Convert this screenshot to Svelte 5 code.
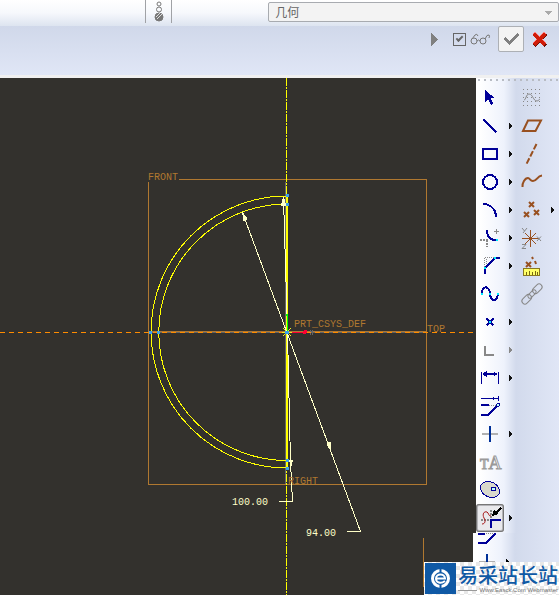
<script lang="ts">
	interface Tool {
		name: string;
		label: string;
		flyout?: boolean;
		disabled?: boolean;
	}

	const sketchTools: Tool[] = [
		{ name: 'select', label: 'Select' },
		{ name: 'line', label: 'Line', flyout: true },
		{ name: 'rect', label: 'Rectangle', flyout: true },
		{ name: 'circle', label: 'Circle', flyout: true },
		{ name: 'arc', label: 'Arc', flyout: true },
		{ name: 'fillet', label: 'Fillet', flyout: true },
		{ name: 'chamfer', label: 'Chamfer', flyout: true },
		{ name: 'spline', label: 'Spline' },
		{ name: 'point', label: 'Point', flyout: true },
		{ name: 'edge', label: 'Use edge', flyout: true, disabled: true },
		{ name: 'dimension', label: 'Dimension', flyout: true },
		{ name: 'modify', label: 'Modify' },
		{ name: 'constrain', label: 'Constrain', flyout: true },
		{ name: 'text', label: 'Text' },
		{ name: 'palette', label: 'Palette' },
		{ name: 'trim', label: 'Trim', flyout: true }
	];

	const datumTools: Tool[] = [
		{ name: 'sketch', label: 'Sketch' },
		{ name: 'plane', label: 'Datum plane' },
		{ name: 'axis', label: 'Datum axis' },
		{ name: 'curve', label: 'Datum curve' },
		{ name: 'points', label: 'Datum points', flyout: true },
		{ name: 'csys', label: 'Coordinate system' },
		{ name: 'analysis', label: 'Analysis' },
		{ name: 'link', label: 'Reference' }
	];

	let active = $state('trim');
	let filter = $state('geometry');
	let preview = $state(true);
</script>

{#snippet icon(name: string)}
	<svg class="icon" viewBox="0 0 28 28" width="28" height="28" aria-hidden="true">
		{#if name === 'select'}
			<path class="fill-navy" d="M9 6V18L12 15.5L15 21L17.5 20L14.5 14.5L18 13.5Z" />
		{:else if name === 'line'}
			<path class="navy" d="M7.5 7.5L20.5 20.5" />
		{:else if name === 'rect'}
			<rect class="navy" x="7" y="9" width="14" height="10" />
		{:else if name === 'circle'}
			<circle class="navy" cx="14" cy="14" r="7" />
		{:else if name === 'arc'}
			<path class="navy" d="M7 8C14 8 20 13 20 21" />
		{:else if name === 'fillet'}
			<path class="navy" d="M11 6V9C12 13 15 16 20 16" />
			<path class="grey" d="M18 7.5H23M20.5 5V10" />
			<path class="grey-2 dots" d="M4 16H13M11 16V23" />
			<path class="fill-cyan" d="M20 15h2v2h-2z" />
		{:else if name === 'chamfer'}
			<path class="grey dots-1" d="M8.5 5.5H18M8.5 5.5V15M10.5 7V14" />
			<path class="navy" d="M24 6H19L9 16V22" />
			<path class="fill-cyan" d="M18 5h2v2h-2zM8 15h2v2h-2z" />
		{:else if name === 'spline'}
			<path class="navy" d="M6 14C6 5 13 5 14 14C15 22 21 22 22 14" />
			<path class="fill-cyan" d="M5 13h2v2h-2zM13 13h2v2h-2zM21 13h2v2h-2z" />
		{:else if name === 'point'}
			<path class="navy" d="M10.5 10.5L17.5 17.5M17.5 10.5L10.5 17.5" />
			<path class="fill-cyan" d="M13 13h2v2h-2z" />
		{:else if name === 'edge'}
			<path class="grey-2" d="M9 10V19H18" />
		{:else if name === 'dimension'}
			<path class="navy-1" d="M5.5 8V20M22.5 8V20" />
			<path class="navy" d="M8 10H20" />
			<path class="fill-navy" d="M6.5 10L10.5 7V13ZM21.5 10L17.5 7V13Z" />
		{:else if name === 'modify'}
			<path class="navy-1" d="M5 6.5H23M22.5 4V9M17.5 5V8" />
			<path class="navy" d="M5 13H13M20 15L12 23H5" />
			<path class="grey dots-1" d="M13 13.5H20" />
			<circle class="node" cx="22" cy="13" r="1.5" />
		{:else if name === 'constrain'}
			<path class="light" d="M6 14H22" />
			<path class="blue" d="M14 6V22" />
		{:else if name === 'text'}
			<text class="glyph" x="4" y="21"><tspan class="small">T</tspan>A</text>
		{:else if name === 'palette'}
			<ellipse class="palette" cx="14" cy="13.5" rx="10" ry="7.500" transform="rotate(25 14 13.5)" />
			<circle class="node" cx="17.5" cy="13" r="2" />
		{:else if name === 'trim'}
			<path class="grey-2 dots" d="M5 16H14M15 6V16" />
			<path class="red" d="M6 20C9 20 10 17 8 14C6 10 8 7 11 8C13 9 12 12 15 12" />
			<path class="navy" d="M15 24V16H25" />
			<path class="black" d="M25 4L20 9" />
			<path class="fill-black" d="M16 12L18 6L23 10Z" />
		{:else if name === 'sketch'}
			<path
				class="grey grid-dots"
				d="M5 5.5H23M5 9.5H23M5 13.5H23M5 17.5H23M5 21.5H23"
			/>
			<path class="grey soft" d="M6 16C8 16 8 10 11 10C15 10 15 17 19 17C21 17 21 15 22 15" />
		{:else if name === 'plane'}
			<path class="brown" d="M5 19L10 8.5H23L17.5 19Z" />
		{:else if name === 'axis'}
			<path class="brown" stroke-dasharray="6 2" d="M18.5 4L8.5 24" />
		{:else if name === 'curve'}
			<path class="brown" d="M4.5 19C4 15 7 10 10 10C12 10 12 13 15 13C19 13 19 8 24 7.5" />
		{:else if name === 'points'}
			<path
				class="brown"
				d="M11 6L16 11M16 6L11 11M6 16L11 21M11 16L6 21M16 14L21 19M21 14L16 19"
			/>
		{:else if name === 'csys'}
			<path class="brown-1" d="M4 14.5H21M12.5 6V23M7 9L18 20M18 9L7 20" />
			<path
				class="grey soft"
				d="M4 4L6.5 7M9 4L5 9M19 12.5L23 17M23 12.5L19 17M4 20.5H8L4 24.5H8"
			/>
		{:else if name === 'analysis'}
			<path class="brown" d="M8 10L13 15M13 10L8 15M14 5L15 7M17 9L18 12" />
			<rect class="ruler" x="5.5" y="16.5" width="16" height="7" />
			<path class="ticks" d="M8.5 23V20M11.5 23V19M14.5 23V20M17.5 23V19M19.5 23V20" />
		{:else if name === 'link'}
			<g class="grey soft" transform="rotate(-45 14 14)">
				<rect x="1" y="11" width="11" height="6" rx="3" />
				<rect x="9" y="12" width="10" height="4" rx="2" />
				<rect x="16" y="11" width="11" height="6" rx="3" />
			</g>
		{/if}
	</svg>
{/snippet}

{#snippet column(tools: Tool[])}
	<div class="column">
		{#each tools as tool (tool.name)}
			<div class="tool-row">
				<button
					class="tool"
					class:tool--active={active === tool.name}
					aria-label={tool.label}
					disabled={tool.disabled}
					onclick={() => (active = tool.name)}
				>
					{@render icon(tool.name)}
				</button>
				{#if tool.flyout}
					<button class="flyout" aria-label="{tool.label} options" disabled={tool.disabled}>
						<svg viewBox="0 0 4 6" width="4" height="6"><path d="M0 0L4 3L0 6Z" /></svg>
					</button>
				{/if}
			</div>
		{/each}
	</div>
{/snippet}

<div class="app">
	<header class="topbar">
		<div class="topbar-tools">
			<button class="probe" aria-label="Appearance">
				<svg class="soft" viewBox="0 0 12 22" width="12" height="22">
					<circle cx="6" cy="3" r="2" />
					<circle cx="6" cy="8.5" r="2.5" />
					<circle class="ball" cx="6" cy="16" r="4" />
					<path class="shine" d="M3 16L7 12M4 18L9 13" />
				</svg>
			</button>
		</div>
		<div class="filter">
			<select bind:value={filter} aria-label="Selection filter">
				<option value="geometry">几何</option>
			</select>
			<svg class="caret" viewBox="0 0 8 4" width="8" height="4"><path d="M0 0H8L4 4Z" /></svg>
		</div>
	</header>

	<div class="dashboard">
		<button class="plain resume" aria-label="Resume">
			<svg viewBox="0 0 7 13" width="7" height="13"><path d="M0 0L7 6.5L0 13Z" /></svg>
		</button>
		<label class="preview">
			<input type="checkbox" bind:checked={preview} aria-label="Preview" />
			<svg class="glasses soft" viewBox="0 0 21 12" width="21" height="12">
				<circle cx="4" cy="8" r="3" />
				<circle cx="13" cy="8" r="3" />
				<path d="M7 8Q8.500 6 10 8M2 6L5 2Q7 0 8 3M15 6Q17 1 19 2Q20 3 19 5" />
			</svg>
		</label>
		<button class="accept" aria-label="Accept">
			<svg viewBox="0 0 18 14" width="18" height="14">
				<path d="M1 7L3 5L7 9L15 1L17 3L7 13Z" />
			</svg>
		</button>
		<button class="plain" aria-label="Cancel">
			<svg viewBox="0 0 16 15" width="16" height="15">
				<path class="x-shade" d="M2 2L14 14M14 2L2 14" />
				<path class="x-light" d="M2 1L13 12M13 1L2 12" />
				<path class="x-main" d="M2 2L13 13M13 2L2 13" />
			</svg>
		</button>
	</div>

	<main class="workspace">
		<svg class="canvas" viewBox="0 78 476 517" preserveAspectRatio="xMinYMin slice" role="img" aria-label="Sketch">
			<!-- datum planes -->
			<path class="datum" d="M179 179.5H426.5V484.5H148.5V182" />
			<path class="datum" d="M423.5 538V587" />
			<path class="shadow" d="M150 332.5H426M285.500 182V484" />
			<path class="datum" d="M150 331.5H426" />
			<path class="reference" d="M0 332.5H476" />
			<path class="centerline" d="M286.5 78V595" />

			<!-- section -->
			<path class="section" d="M287 196A136 136 0 0 0 287 468" />
			<path class="section" d="M287 204A128 128 0 0 0 287 460.500" />
			<path class="section axis" d="M287 196V468" />

			<!-- dimensions -->
			<path class="leader" d="M242.5 212.500L360.500 531.500H347" />
			<path class="leader" d="M283.5 197L287.500 332L290.500 462L292.500 501.500H279" />
			<path class="leader head" d="M242.5 212.500L244 221L247 219ZM331 451L327 444L330 442ZM283.500 197L281.500 205H285.500ZM291 466L289.500 460H292.500Z" />

			<path class="vertex" d="M286 194h3v3h-3zM286 203h3v3h-3zM286 459h3v3h-3zM286 467h3v3h-3zM149 331h3v3h-3zM157 331h3v3h-3z" />

			<!-- csys -->
			<path class="axis-y" d="M287.5 331V314" />
			<path class="axis-x" d="M288 332.5H304" />
			<circle class="fill-green" cx="287" cy="315" r="1.5" />
			<circle class="fill-red" cx="305" cy="332" r="2" />
			<path class="shadow" d="M310 330L313 335M313 330L310 335" />
			<path class="origin" d="M283 328L291 336M291 328L283 336M282 332H292" />
			<path class="vertex" d="M285 331h4v3h-4z" />

			<text class="tag" x="148" y="180">FRONT</text>
			<text class="tag" x="294" y="327">PRT_CSYS_DEF</text>
			<text class="tag" x="427" y="332">TOP</text>
			<text class="tag" x="288" y="484">RIGHT</text>
			<text class="value" x="232" y="505">100.00</text>
			<text class="value" x="306" y="536">94.00</text>
		</svg>

		<aside class="sidebar">
			{@render column(sketchTools)}
			{@render column(datumTools)}
		</aside>
	</main>

	<div class="corner">
		<div class="strip">
			<svg viewBox="0 0 86 29" width="86" height="29" aria-hidden="true">
				<path class="navy" d="M5 1H12M21 2L13 10H5" />
				<path class="grey dots-1" d="M13 0.500H20" />
				<circle class="node" cx="22" cy="1" r="1" />
				<path class="light" d="M6 28.500H22" />
				<path class="blue" d="M14 21V29" />
				<path class="fill-black" d="M33 26L37 29H33Z" />
			</svg>
		</div>
		<div class="brand">
			<svg class="logo" viewBox="0 0 31 31" width="31" height="31" aria-hidden="true">
				<rect class="logo-bg" width="31" height="31" />
				<circle class="logo-ring" cx="15.500" cy="15.500" r="8" />
				<path class="logo-gap" d="M15.500 4V10M15.500 21V28" />
				<path class="logo-e" d="M11 15.500H20C20 10 11 10 11 15.500C11 20 16 21 20 18" />
			</svg>
			<div class="brand-text">
				<span class="brand-name">易采站长站</span>
				<span class="brand-url">Www.Easck.Com Webmaster</span>
			</div>
		</div>
	</div>
</div>

<style>
	:global(body) {
		margin: 0;
	}
	.app {
		position: relative;
		display: flex;
		flex-direction: column;
		min-height: 100vh;
		overflow: hidden;
		font-family: 'Liberation Sans', 'Noto Sans CJK SC', sans-serif;
		font-size: 12px;
	}
	button {
		display: flex;
		align-items: center;
		justify-content: center;
		margin: 0;
		padding: 0;
		border: 0;
		background: none;
	}
	svg {
		display: block;
		fill: none;
		shape-rendering: crispEdges;
	}

	.topbar {
		display: flex;
		justify-content: space-between;
		height: 26px;
		background: linear-gradient(#fff, #f6f8fc 50%, #dde4f0);
	}
	.topbar-tools {
		padding-left: 145px;
	}
	.probe {
		width: 27px;
		height: 23px;
		border: solid #a0a2a6;
		border-width: 0 1px;
	}
	.probe circle {
		stroke: #777;
	}
	.probe .ball {
		fill: #777;
	}
	.shine {
		stroke: #ddd;
	}
	.filter {
		position: relative;
		width: 52%;
		padding-top: 2px;
	}
	.filter select {
		appearance: none;
		width: 100%;
		height: 20px;
		padding: 0 20px 0 6px;
		border: 1px solid #a8abb0;
		border-radius: 2px;
		background: #f3f3f3;
		color: #666;
		font: 12px/18px 'Noto Sans CJK SC', sans-serif;
	}
	.caret {
		position: absolute;
		top: 11px;
		right: 7px;
	}
	.caret path {
		fill: #aaa;
	}

	.dashboard {
		display: flex;
		align-items: flex-start;
		justify-content: flex-end;
		height: 49px;
		padding-right: 11px;
		border-bottom: 3px solid #f0f0f0;
		background: linear-gradient(#d0d8ea, #e0e6f6);
	}
	.plain {
		height: 26px;
	}
	.resume {
		margin-right: 15px;
	}
	.resume path,
	.accept path {
		fill: #808080;
	}
	.preview {
		display: flex;
		align-items: center;
		gap: 4px;
		height: 26px;
	}
	.preview input {
		appearance: none;
		display: grid;
		place-items: center;
		box-sizing: border-box;
		width: 13px;
		height: 13px;
		margin: 0;
		border: 1px solid #666;
	}
	.preview input:checked::before {
		content: '';
		width: 5px;
		height: 2px;
		margin-bottom: 3px;
		border: solid #666;
		border-width: 0 0 2px 2px;
		transform: rotate(-45deg);
	}
	.glasses {
		stroke: #777;
	}
	.accept {
		width: 26px;
		height: 26px;
		margin: 0 8px 0 7px;
		border: 1px solid #adb0b5;
		border-radius: 2px;
		background: #f3f3f3;
	}
	.x-shade,
	.x-light,
	.x-main {
		stroke: #6e1208;
		stroke-width: 4;
	}
	.x-light {
		stroke: #f88;
		stroke-width: 3;
	}
	.x-main {
		stroke: #d01c08;
		stroke-width: 3;
	}

	.workspace {
		display: flex;
		flex: 1;
		background: #33312d;
	}
	.canvas {
		flex: 1;
		min-width: 0;
		width: 0;
		height: auto;
	}
	.datum {
		stroke: #b07830;
	}
	.shadow {
		stroke: #666;
	}
	.reference {
		stroke: #ff8c00;
		stroke-dasharray: 5 4;
	}
	.centerline {
		stroke: #ff0;
		stroke-dasharray: 8 1 2 1;
	}
	.section {
		stroke: #ff0;
	}
	.axis {
		stroke-width: 2;
	}
	.leader {
		stroke: #ffffc8;
	}
	.head {
		fill: #ffffc8;
	}
	.vertex {
		fill: #3aa0e8;
	}
	.axis-y {
		stroke: #0f0;
	}
	.axis-x {
		stroke: #f03;
	}
	.fill-green {
		fill: #0f0;
	}
	.fill-red {
		fill: #f03;
	}
	.origin {
		stroke: #ee2;
	}
	.tag,
	.value {
		font-family: 'Liberation Mono', monospace;
		font-size: 10px;
		fill: #b07830;
	}
	.value {
		fill: #ffffc8;
	}

	.sidebar {
		display: flex;
		align-items: flex-start;
		gap: 2px;
		box-sizing: border-box;
		width: 83px;
		padding-top: 6px;
		background:
			repeating-linear-gradient(90deg, transparent 0 2px, #b8bcc4 2px 4px, transparent 4px 6px) 0 1px /
				100% 2px no-repeat,
			linear-gradient(90deg, #fff 4px, #eef2fc 28px, #d2daec 40px, #e0e6f6 83px);
	}
	.column {
		width: 40px;
	}
	.tool-row {
		display: flex;
		height: 28px;
	}
	.tool {
		width: 28px;
		height: 28px;
	}
	.tool--active {
		border-radius: 3px;
		background: #e9e9ec;
		box-shadow:
			inset 0 0 0 1px #777,
			inset 0 0 0 2px #b4b4b8;
	}
	.flyout {
		width: 12px;
		padding-left: 2px;
	}
	.flyout path {
		fill: #111;
	}
	.flyout:disabled path {
		fill: #888;
	}

	.navy,
	.navy-1,
	.palette,
	.node {
		stroke: #000098;
		stroke-width: 2;
	}
	.navy-1,
	.palette,
	.node {
		stroke-width: 1;
	}
	.palette {
		fill: #d8d8cc;
	}
	.node {
		fill: #bff;
	}
	.blue {
		stroke: #003098;
		stroke-width: 2;
	}
	.light {
		stroke: #b0b0b0;
		stroke-width: 2;
	}
	.grey,
	.grey-2 {
		stroke: #888;
	}
	.grey-2 {
		stroke-width: 2;
	}
	.dots {
		stroke-dasharray: 2 1;
	}
	.dots-1 {
		stroke-dasharray: 1 1;
	}
	.grid-dots {
		stroke-dasharray: 1 3;
	}
	.soft {
		shape-rendering: auto;
	}
	.brown,
	.brown-1 {
		stroke: #985020;
		stroke-width: 2;
		shape-rendering: auto;
	}
	.brown-1 {
		stroke-width: 1;
	}
	.red {
		stroke: #a81818;
		shape-rendering: auto;
	}
	.black {
		stroke: #000;
		stroke-width: 2;
	}
	.fill-navy {
		fill: #000098;
	}
	.fill-cyan {
		fill: #0ef;
	}
	.fill-black {
		fill: #000;
	}
	.ruler {
		fill: #ff6;
		stroke: #887820;
	}
	.ticks {
		stroke: #776810;
	}
	.glyph {
		font-family: 'Liberation Serif', serif;
		font-size: 18px;
		fill: #fff;
		stroke: #999;
	}
	.small {
		font-size: 14px;
	}

	.corner {
		position: absolute;
		right: 0;
		bottom: 0;
		display: flex;
		flex-direction: column;
		align-items: flex-end;
	}
	.strip {
		background: linear-gradient(90deg, #fff 4px, #eef2fc 28px, #d2daec 42px, #e0e6f6);
	}
	.brand {
		display: flex;
		gap: 2px;
		padding: 1px;
		background: repeating-conic-gradient(#e8e8e8 0 25%, #fff 0 50%) 0 0 / 8px 8px;
	}
	.logo {
		shape-rendering: auto;
	}
	.logo-bg {
		fill: #0f59a5;
	}
	.logo-ring,
	.logo-e {
		stroke: #fff;
		stroke-width: 3;
	}
	.logo-e {
		stroke-width: 2;
	}
	.logo-gap {
		stroke: #0f59a5;
		stroke-width: 2;
	}
	.brand-text {
		display: flex;
		flex-direction: column;
		width: 100px;
	}
	.brand-name {
		font: 500 20px/24px 'Noto Sans CJK SC', sans-serif;
		color: #0f59a5;
		white-space: nowrap;
	}
	.brand-url {
		display: flex;
		align-items: center;
		gap: 2px;
		font-size: 6px;
		line-height: 7px;
		color: #777;
		white-space: nowrap;
	}
	.brand-url::before {
		content: '';
		flex: 1;
		height: 1px;
		background: #999;
	}
</style>
